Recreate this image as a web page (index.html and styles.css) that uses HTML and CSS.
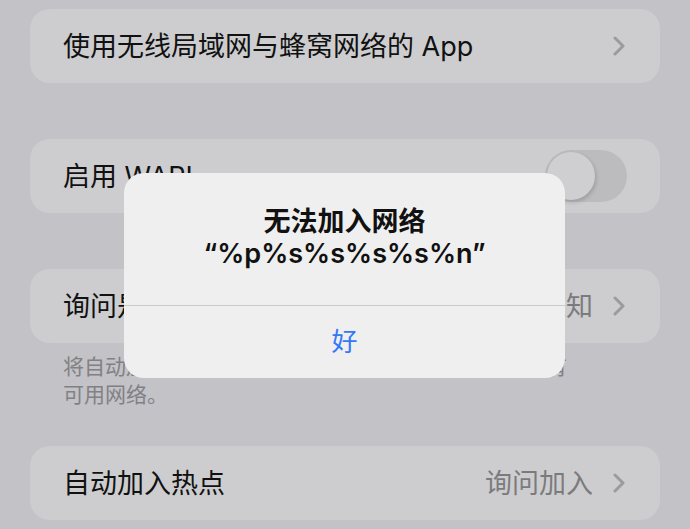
FILE: index.html
```html
<!DOCTYPE html>
<html lang="zh-CN">
<head>
    <meta charset="UTF-8">
    <meta name="viewport" content="width=device-width, initial-scale=1.0">
    <title>无线局域网</title>
    <link rel="stylesheet" href="styles.css">
</head>
<body>
    <div class="settings">
        <div class="group group-first">
            <div class="row">
                <span class="label">使用无线局域网与蜂窝网络的 App</span>
                <span class="chevron"><svg width="12" height="20" viewBox="0 0 12 20"><path d="M2 2 L10 10 L2 18" fill="none" stroke="#9b9b9d" stroke-width="3" stroke-linecap="round" stroke-linejoin="round"/></svg></span>
            </div>
        </div>

        <div class="group">
            <div class="row">
                <span class="label">启用 WAPI</span>
                <div class="toggle"><div class="knob"></div></div>
            </div>
        </div>

        <div class="group">
            <div class="row">
                <span class="label">询问是否加入网络</span>
                <span class="value">通知</span>
                <span class="chevron"><svg width="12" height="20" viewBox="0 0 12 20"><path d="M2 2 L10 10 L2 18" fill="none" stroke="#9b9b9d" stroke-width="3" stroke-linecap="round" stroke-linejoin="round"/></svg></span>
            </div>
        </div>
        <p class="footnote">将自动加入已知网络。如果没有已知网络，将通知您有可用网络。</p>

        <div class="group group-last">
            <div class="row">
                <span class="label">自动加入热点</span>
                <span class="value">询问加入</span>
                <span class="chevron"><svg width="12" height="20" viewBox="0 0 12 20"><path d="M2 2 L10 10 L2 18" fill="none" stroke="#9b9b9d" stroke-width="3" stroke-linecap="round" stroke-linejoin="round"/></svg></span>
            </div>
        </div>
    </div>

    <div class="alert">
        <div class="alert-body">
            <div class="alert-title">无法加入网络</div>
            <div class="alert-title">“%p%s%s%s%s%n”</div>
        </div>
        <div class="alert-button">好</div>
    </div>
</body>
</html>
```

FILE: styles.css
```css
body {
    font-family: Inter, "Noto Sans CJK SC", sans-serif;
    background-color: #c3c2c7;
    margin: 0;
    padding: 0;
    width: 690px;
    height: 529px;
    overflow: hidden;
    position: relative;
}

.settings {
    padding: 9px 30px 0 30px;
}

.group {
    background-color: #cdcdcf;
    border-radius: 20px;
    margin-top: 56px;
}

.group-first {
    margin-top: 0;
}

.group-last {
    margin-top: 37px;
}

.row {
    height: 74px;
    display: flex;
    align-items: center;
    padding: 0 35px 0 33px;
    font-size: 27px;
    color: #111;
}

.label,
.value {
    padding-bottom: 4px;
}

.label {
    flex: 1;
    white-space: nowrap;
}

.value {
    color: #7b7b7d;
    margin-right: 20px;
}

.chevron {
    display: flex;
    align-items: center;
}

.toggle {
    width: 82px;
    height: 52px;
    border-radius: 26px;
    background-color: #bcbcbe;
    margin-right: -2px;
    padding: 2px;
    box-sizing: border-box;
}

.knob {
    width: 48px;
    height: 48px;
    border-radius: 50%;
    background-color: #cfcfd1;
    box-shadow: 1px 2px 4px rgba(0, 0, 0, 0.18);
}

.footnote {
    margin: 10px 0 0 0;
    padding: 0 80px 0 33px;
    font-size: 21px;
    line-height: 28px;
    color: #818184;
}

.alert {
    position: absolute;
    left: 124px;
    top: 173px;
    width: 441px;
    height: 205px;
    background-color: #efefef;
    border-radius: 20px;
    display: flex;
    flex-direction: column;
    overflow: hidden;
}

.alert-body {
    padding: 33px 20px 0 20px;
    height: 99px;
    border-bottom: 1px solid #cbcbcd;
}

.alert-title {
    text-align: center;
    font-size: 27px;
    line-height: 32px;
    font-weight: 600;
    color: #111;
}

.alert-button {
    flex: 1;
    display: flex;
    align-items: center;
    justify-content: center;
    font-size: 26px;
    color: #3478f6;
    padding-bottom: 6px;
}
```
